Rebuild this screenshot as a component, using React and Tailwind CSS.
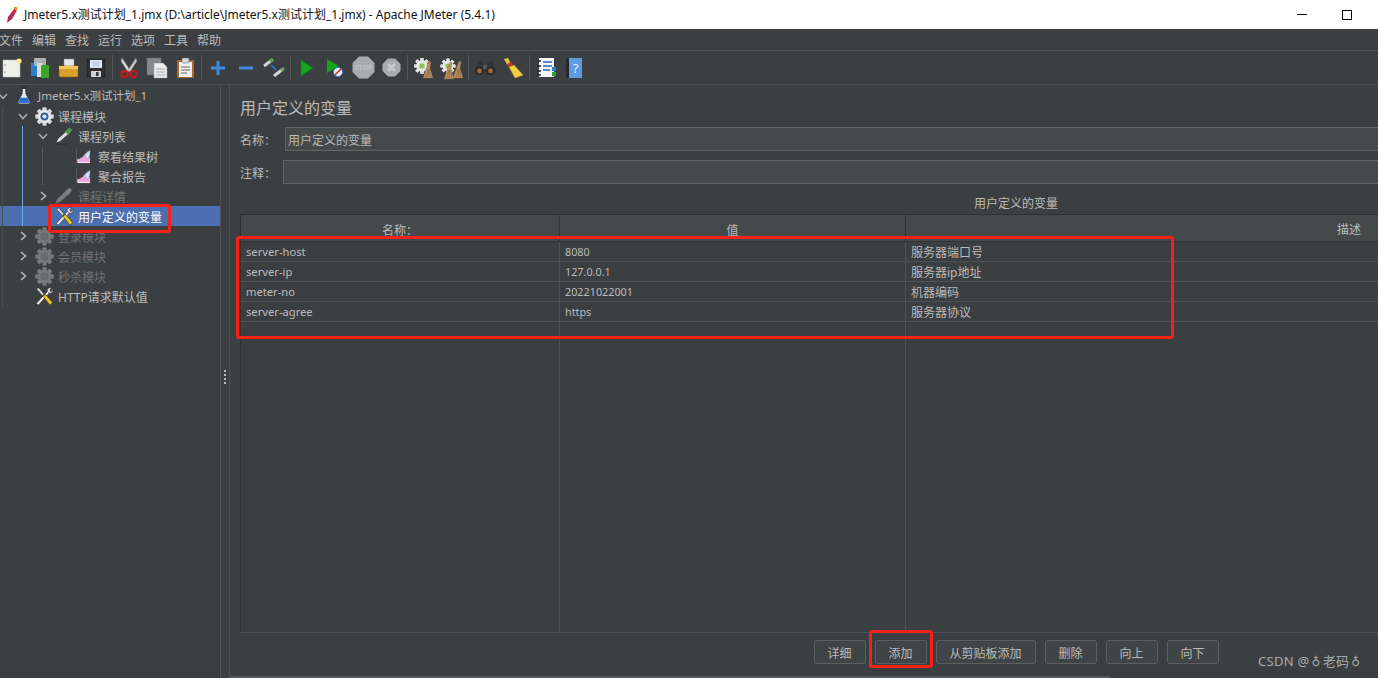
import React from "react";

const FONT = { fontFamily: '"Noto Sans","Noto Sans CJK SC",sans-serif' };

function Cog({ cx, cy, r, hub }) {
  const teeth = [0, 45, 90, 135, 180, 225, 270, 315];
  return (
    <g>
      {teeth.map((a) => (
        <rect key={a} x={cx - r * 0.2} y={cy - r} width={r * 0.4} height={r * 2} rx="0.5" fill="#dcdee0" transform={`rotate(${a} ${cx} ${cy})`} />
      ))}
      <circle cx={cx} cy={cy} r={r * 0.72} fill="#e8e9eb" />
      <circle cx={cx} cy={cy} r={r * 0.34} fill={hub} />
    </g>
  );
}
function Broom({ x, y }) {
  return (
    <g transform={`translate(${x} ${y})`}>
      <path d="M6 0 L8 1 L7 7 L10 17 L0 17 L3 8 Z" fill="#b98d5e" stroke="#7d5f3d" strokeWidth="0.4" />
      <path d="M3 16 L5 8 M5 16 L6 8 M7.5 16 L6.5 8" stroke="#84633f" strokeWidth="0.6" />
    </g>
  );
}
function Gear({ dim }) {
  const teeth = [0, 45, 90, 135, 180, 225, 270, 315];
  return (
    <svg width="19" height="19" viewBox="0 0 20 20" className="shrink-0">
      {teeth.map((a) => (
        <rect key={a} x="8" y="0.5" width="4" height="19" rx="0.8" fill={dim ? "#77797a" : "#d4d6d9"} transform={`rotate(${a} 10 10)`} />
      ))}
      <circle cx="10" cy="10" r="7" fill={dim ? "#77797a" : "#e6e8ea"} />
      <circle cx="10" cy="10" r="4.2" fill={dim ? "#696b6c" : "#2f5f9e"} />
      {!dim && <circle cx="10" cy="10" r="2.2" fill="#dbe7f5" />}
    </svg>
  );
}
function Wrench() {
  return (
    <svg width="20" height="19" viewBox="0 0 22 22" className="shrink-0">
      <path d="M2 19 L4.5 21 L18 6 L16 4 Z" fill="#ececec" stroke="#222" strokeWidth="0.7" />
      <path d="M15 5 C14 2 17 0 20 1 L17.5 3.5 L19 5.5 L21.5 3 C22 6 19 8 17 7 Z" fill="#e6e6e6" stroke="#222" strokeWidth="0.6" />
      <path d="M2 2 L5 1 L11 8 L9 10 Z" fill="#dcdcdc" stroke="#222" strokeWidth="0.7" />
      <path d="M10 11 L12.5 8.5 L21 18 L18 21 Z" fill="#f2c91d" stroke="#2a2a10" strokeWidth="0.7" />
    </svg>
  );
}
function Dropper({ dim }) {
  return (
    <svg width="20" height="20" viewBox="0 0 22 20" className="shrink-0">
      <path d="M2 18 L4 13 L13 5 L16 8 L7 16 Z" fill={dim ? "#7a7a7a" : "#d5d8da"} stroke={dim ? "#707070" : "#222"} strokeWidth="0.8" />
      <path d="M12 5 L17 1 L20 3 L16 9 Z" fill={dim ? "#808080" : "#4d9a4b"} />
      {!dim && <path d="M2 19 H14" stroke="#2b2d2f" strokeWidth="1" />}
    </svg>
  );
}
function Listener() {
  return (
    <svg width="14" height="15" viewBox="0 0 15 15" className="shrink-0">
      <path d="M1 14 L1 11 L6 8 L9 4 L14 9 L14 14 Z" fill="#f3a6dc" />
      <path d="M1 10 V14 H14" stroke="#fff" strokeWidth="1" fill="none" />
      <path d="M9 8 C8 5 11 2 14 1 C14 4 14 9 11 10 C10 10 9 9 9 8 Z" fill="#cfe0f5" stroke="#6e8fc0" strokeWidth="0.5" />
    </svg>
  );
}
function Flask() {
  return (
    <svg width="14" height="20" viewBox="0 0 16 20" className="shrink-0">
      <path d="M6 1 H10 V7 L15 17 Q15 19 13 19 H3 Q1 19 1 17 L6 7 Z" fill="#e6e8ea" stroke="#30343a" strokeWidth="0.8" />
      <path d="M4 12 H12 L14.5 18 H1.5 Z" fill="#2a6fd0" />
      <rect x="5" y="0" width="6" height="2" fill="#2b2d30" />
    </svg>
  );
}
function Chevron({ open }) {
  return (
    <svg width="10" height="10" viewBox="0 0 10 10" className="shrink-0">
      {open ? <path d="M1 3 L5 7.5 L9 3" fill="none" stroke="#a8aaac" strokeWidth="1.6" /> : <path d="M3 1 L7.5 5 L3 9" fill="none" stroke="#b4b6b8" strokeWidth="1.6" />}
    </svg>
  );
}

function Row({ indent, arrow, icon, label, dim, selected, labelClass = "pt-1 text-[12px]" }) {
  return (
    <div className={`h-5 flex items-center shrink-0 ${selected ? "bg-[#4b6eaf]" : ""}`}>
      <div className={`flex items-center ${indent}`}>
        <div className="w-5 flex justify-center">{arrow && <Chevron open={arrow === "open"} />}</div>
        <div className="w-[22px] flex justify-center items-center">{icon}</div>
        <span className={`ml-[3px] whitespace-nowrap ${dim ? "text-[#707274]" : selected ? "text-white" : "text-[#bbbbbb]"} ${labelClass}`}>{label}</span>
      </div>
    </div>
  );
}

const TSep = () => <div className="w-px h-[25px] bg-[#55585a] mx-[2px] shrink-0" />;
const TB = ({ children }) => <div className="w-[28px] h-[26px] flex items-center justify-center shrink-0">{children}</div>;

function Toolbar() {
  return (
    <div className="h-[34px] flex items-center -ml-[2px] border-b border-[#505356] shrink-0">
      <TB><svg width="20" height="20" viewBox="0 0 20 20"><rect x="1" y="2" width="17" height="17" fill="#f0f0ea" stroke="#bbb" strokeWidth="0.5" /><circle cx="17" cy="3" r="2.6" fill="#f8e98a" /><circle cx="3" cy="7" r="0.8" fill="#888" /><circle cx="3" cy="14" r="0.8" fill="#888" /></svg></TB>
      <TB><svg width="20" height="22" viewBox="0 0 20 22"><rect x="1" y="6" width="6" height="13" fill="#2b7fcb" /><rect x="4" y="1" width="12" height="8" rx="1" fill="#a9b2b8" /><rect x="7" y="6" width="5" height="14" fill="#d8dde0" /><rect x="11" y="8" width="8" height="13" rx="1" fill="#3aa824" /></svg></TB>
      <TB><svg width="21" height="20" viewBox="0 0 21 20"><rect x="6" y="1" width="10" height="8" fill="#e8e8e8" stroke="#888" strokeWidth="0.5" /><path d="M1 8 H20 V18 Q20 19 19 19 H2 Q1 19 1 18 Z" fill="#d9a02e" stroke="#8a5d10" strokeWidth="0.6" /><path d="M1 8 H20 V11 H1 Z" fill="#f0c65a" /></svg></TB>
      <TB><svg width="20" height="20" viewBox="0 0 20 20"><path d="M1 1 H19 V19 H1 Z" fill="#2d2f33" stroke="#111" strokeWidth="0.4" /><rect x="4" y="2" width="12" height="8" fill="#dfe7f2" /><path d="M6 4 H14 M6 6 H14 M6 8 H14" stroke="#9db4d0" strokeWidth="0.7" /><rect x="5" y="13" width="10" height="6" fill="#cfd2d4" /><rect x="10" y="14" width="2.5" height="4" fill="#33363a" /></svg></TB>
      <TSep />
      <TB><svg width="18" height="22" viewBox="0 0 18 22"><path d="M2 1 L10 13 L8 15 L1 4 Z" fill="#d8dadc" stroke="#777" strokeWidth="0.5" /><path d="M16 1 L8 13 L10 15 L17 4 Z" fill="#c9cbce" stroke="#777" strokeWidth="0.5" /><circle cx="4.5" cy="17" r="3.2" fill="none" stroke="#c8171e" strokeWidth="2.2" /><circle cx="13.5" cy="17" r="3.2" fill="none" stroke="#c8171e" strokeWidth="2.2" /></svg></TB>
      <TB><svg width="22" height="22" viewBox="0 0 22 22"><rect x="1" y="1" width="14" height="17" fill="#85898c" stroke="#6a6d70" strokeWidth="0.5" /><path d="M8 6 H17 L21 10 V21 H8 Z" fill="#ececec" stroke="#999" strokeWidth="0.5" /><path d="M10 12 H19 M10 15 H19 M10 18 H19" stroke="#9a9a9a" strokeWidth="0.8" /></svg></TB>
      <TB><svg width="19" height="22" viewBox="0 0 19 22"><rect x="1" y="3" width="17" height="18" rx="1" fill="#a86a2a" /><rect x="3" y="5" width="13" height="15" fill="#efefef" /><rect x="6" y="1" width="7" height="5" rx="1" fill="#d4d6d8" stroke="#666" strokeWidth="0.5" /><path d="M5 10 H14 M5 13 H14 M5 16 H11" stroke="#555" strokeWidth="0.9" /></svg></TB>
      <TSep />
      <TB><svg width="16" height="16" viewBox="0 0 16 16"><path d="M8 1 V15 M1 8 H15" stroke="#3f8bdc" strokeWidth="3" /></svg></TB>
      <TB><svg width="16" height="16" viewBox="0 0 16 16"><path d="M1 8 H15" stroke="#3f8bdc" strokeWidth="3" /></svg></TB>
      <TB><svg width="22" height="20" viewBox="0 0 22 20"><path d="M1 8 L9 2" stroke="#d2d5d8" strokeWidth="3" /><path d="M7 3.5 L10 1" stroke="#62a35c" strokeWidth="3" /><path d="M11 18 L20 11" stroke="#d2d5d8" strokeWidth="3" /><path d="M18 12.5 L21 10" stroke="#62a35c" strokeWidth="3" /><path d="M8 7 L13 12" stroke="#2f78d0" strokeWidth="1.6" /></svg></TB>
      <TSep />
      <TB><svg width="14" height="18" viewBox="0 0 14 18"><path d="M1 1 L13 9 L1 17 Z" fill="#13a51b" stroke="#0d7a13" strokeWidth="0.5" /></svg></TB>
      <TB><svg width="18" height="20" viewBox="0 0 18 20"><path d="M1 1 L13 8 L1 15 Z" fill="#13a51b" /><circle cx="12" cy="14" r="4.6" fill="#e8eef8" stroke="#3a6fc0" strokeWidth="1" /><path d="M9 17 L15 11" stroke="#d32323" strokeWidth="1.4" /></svg></TB>
      <TB><svg width="23" height="23" viewBox="0 0 23 23"><path d="M7 0.5 H16 L22.5 7 V16 L16 22.5 H7 L0.5 16 V7 Z" fill="#a9abad" /><text x="11.5" y="14" textAnchor="middle" fontSize="7" fontWeight="700" fill="#c0c2c4" style={FONT}>STOP</text></svg></TB>
      <TB><svg width="19" height="19" viewBox="0 0 19 19"><path d="M6 0.5 H13 L18.5 6 V13 L13 18.5 H6 L0.5 13 V6 Z" fill="#a9abad" /><path d="M6 6 L13 13 M13 6 L6 13" stroke="#c6c8ca" strokeWidth="2.6" /></svg></TB>
      <TSep />
      <TB><svg width="22" height="24" viewBox="0 0 22 24"><Cog cx={9} cy={10} r={8} hub="#8fc24a" /><Broom x={10} y={5} /></svg></TB>
      <TB><svg width="24" height="24" viewBox="0 0 24 24"><Cog cx={8} cy={10} r={7.5} hub="#8fc24a" /><Broom x={4} y={6} /><Broom x={13} y={5} /></svg></TB>
      <TSep />
      <TB><svg width="22" height="16" viewBox="0 0 22 16"><circle cx="5.5" cy="10.5" r="5" fill="#2b2b2b" /><circle cx="16.5" cy="10.5" r="5" fill="#2b2b2b" /><circle cx="5.5" cy="11" r="2.4" fill="#a8683a" /><circle cx="16.5" cy="11" r="2.4" fill="#a8683a" /><rect x="3" y="1" width="6" height="6" fill="#343434" /><rect x="13" y="1" width="6" height="6" fill="#343434" /><rect x="9" y="5" width="4" height="4" fill="#555" /></svg></TB>
      <TB><svg width="22" height="22" viewBox="0 0 22 22"><path d="M2 2 L6 1 L9 7 L6 9 Z" fill="#e8c33a" /><path d="M5 7 L10 5 L11 8 L7 10 Z" fill="#d22c2c" /><path d="M7 10 L12 8 L21 18 L13 21 Z" fill="#f0d23c" stroke="#b39a20" strokeWidth="0.5" /></svg></TB>
      <TSep />
      <TB><svg width="20" height="21" viewBox="0 0 20 21"><rect x="3" y="1" width="15" height="19" fill="#f7f7f7" /><path d="M1 4 H5 M1 9 H5 M1 14 H5 M1 18 H5" stroke="#222" strokeWidth="1.5" /><path d="M7 5 H16 M7 9 H16 M7 13 H14" stroke="#2a66c4" strokeWidth="1.3" /><rect x="16" y="10" width="4" height="4" fill="#2c7fd0" /><rect x="16" y="15" width="4" height="4" fill="#2f9e36" /></svg></TB>
      <TB><svg width="18" height="22" viewBox="0 0 18 22"><rect x="1" y="1" width="16" height="20" rx="1" fill="#25282b" /><rect x="4" y="1" width="13" height="20" fill="#5e9be0" /><text x="10.5" y="16" textAnchor="middle" fontSize="13" fill="#e8f0fb" style={FONT}>?</text></svg></TB>
    </div>
  );
}

const rows = [
  ["server-host", "8080", "服务器端口号"],
  ["server-ip", "127.0.0.1", "服务器ip地址"],
  ["meter-no", "20221022001", "机器编码"],
  ["server-agree", "https", "服务器协议"],
];

const Btn = ({ children, w }) => (
  <div className={`${w} h-6 shrink-0 border border-[#5e6060] rounded-[3px] bg-[#3f4446] text-[12px] text-[#bbbbbb] flex items-center justify-center pt-[3px] pr-px`}>{children}</div>
);

export default function App() {
  return (
    <div className="relative w-[1378px] h-[678px] overflow-hidden bg-[#3c3f41] flex flex-col" style={FONT}>
      {/* Title bar */}
      <div className="h-[29px] bg-white flex items-center shrink-0">
        <svg width="12" height="18" viewBox="0 0 12 18" className="ml-[6px] shrink-0">
          <path d="M1 17 L2 11 L8 3 L11 4 L6 13 Z" fill="#b52a4e" />
          <path d="M8 1 L11 1 L11 4 L8 3 Z" fill="#e58a2d" />
        </svg>
        <span className="ml-[6px] text-[12px] text-[#111] whitespace-nowrap">Jmeter5.x测试计划_1.jmx (D:\article\Jmeter5.x测试计划_1.jmx) - Apache JMeter (5.4.1)</span>
        <div className="ml-auto flex items-center mr-[26px]">
          <div className="w-[10px] h-px bg-black mr-[35px]" />
          <div className="w-[10px] h-[10px] border border-black" />
        </div>
      </div>
      {/* Menu */}
      <div className="h-[22px] flex items-center gap-[10px] pt-[2px] text-[12px] text-[#bbbbbb] border-b border-[#505356] shrink-0 -ml-px">
        {["文件", "编辑", "查找", "运行", "选项", "工具", "帮助"].map((m) => <span key={m} className="w-[23px] whitespace-nowrap">{m}</span>)}
      </div>
      <Toolbar />
      {/* Body */}
      <div className="flex flex-1 min-h-0">
        {/* Tree */}
        <div className="relative w-[221px] shrink-0 border-r border-[#505356] pt-[1px] flex flex-col overflow-hidden">
          <Row indent="-ml-[7px]" arrow="open" icon={<Flask />} label="Jmeter5.x测试计划_1" labelClass="text-[11.5px]" />
          <Row indent="pl-[13px]" arrow="open" icon={<Gear />} label="课程模块" />
          <Row indent="pl-[33px]" arrow="open" icon={<Dropper />} label="课程列表" />
          <Row indent="pl-[53px]" icon={<Listener />} label="察看结果树" />
          <Row indent="pl-[53px]" icon={<Listener />} label="聚合报告" />
          <Row indent="pl-[33px]" arrow="closed" icon={<Dropper dim />} label="课程详情" dim />
          <Row indent="pl-[33px]" icon={<Wrench />} label="用户定义的变量" selected />
          <Row indent="pl-[13px]" arrow="closed" icon={<Gear dim />} label="登录模块" dim />
          <Row indent="pl-[13px]" arrow="closed" icon={<Gear dim />} label="会员模块" dim />
          <Row indent="pl-[13px]" arrow="closed" icon={<Gear dim />} label="秒杀模块" dim />
          <Row indent="pl-[13px]" icon={<Wrench />} label="HTTP请求默认值" />
          <div className="absolute left-[22px] top-[41px] h-[100px] w-px bg-[#6aa9e8]" />
          <div className="absolute left-[42px] top-[62px] h-[38px] w-px bg-[#55585a]" />
          <div className="absolute left-[76px] top-[63px] h-[16px] w-px bg-[#55585a]" />
          <div className="absolute left-[76px] top-[83px] h-[16px] w-px bg-[#55585a]" />
          <div className="absolute left-[2px] top-[22px] h-[200px] w-px bg-[#4a4d4f]" />
        </div>
        {/* Splitter */}
        <div className="w-[9px] shrink-0 flex flex-col items-center justify-center gap-[2px] pb-[10px] pr-px border-r border-[#505356]">
          <div className="w-[2px] h-[2px] bg-[#bbbbbb]" />
          <div className="w-[2px] h-[2px] bg-[#bbbbbb]" />
          <div className="w-[2px] h-[2px] bg-[#bbbbbb]" />
          <div className="w-[2px] h-[2px] bg-[#bbbbbb]" />
        </div>
        {/* Right */}
        <div className="flex-1 min-w-0 pl-[10px] flex flex-col">
          <div className="h-[21px] mt-[13px] text-[16px] leading-[21px] text-[#bbbbbb]">用户定义的变量</div>
          <div className="flex items-center h-6 mt-[8px]">
            <span className="w-[45px] text-[12px] text-[#bbbbbb] pt-1">名称：</span>
            <div className="flex-1 h-6 border border-[#646464] bg-[#45494a] text-[12px] text-[#bbbbbb] flex items-center pl-[2px] pt-1 -mr-2">用户定义的变量</div>
          </div>
          <div className="flex items-center h-6 mt-[9px]">
            <span className="w-[43px] text-[12px] text-[#bbbbbb] pt-1">注释：</span>
            <div className="flex-1 h-6 border border-[#646464] bg-[#45494a] -mr-2" />
          </div>
          <div className="h-[21px] mt-[9px] text-center text-[12px] leading-[21px] text-[#bbbbbb] pl-[414px]">用户定义的变量</div>
          <div className="border-t border-l border-b border-[#2f3133] border-b-[#505356] h-[419px] -mr-2 flex flex-col">
            <div className="flex h-[27px] bg-[#45494a] border-b border-[#323436] shrink-0 text-[12px] text-[#bbbbbb]">
              <div className="w-[319px] border-r border-[#323436] flex items-end justify-center leading-[20px]">名称：</div>
              <div className="w-[346px] border-r border-[#323436] flex items-end justify-center leading-[20px]">值</div>
              <div className="flex-1 flex items-end justify-end pr-[25px] leading-[22px]">描述</div>
            </div>
            {rows.map((r, i) => (
              <div key={i} className="flex h-5 border-b border-[#4f5254] shrink-0 text-[#bbbbbb]">
                <div className="w-[319px] border-r border-[#4f5254] pl-[5px] pt-[2px] flex items-center text-[11.2px]">{r[0]}</div>
                <div className="w-[346px] border-r border-[#4f5254] pl-[5px] pt-[2px] flex items-center text-[10.8px]">{r[1]}</div>
                <div className="flex-1 pl-[5px] flex items-center text-[12px] pt-[2px]">{r[2]}</div>
              </div>
            ))}
            <div className="flex flex-1">
              <div className="w-[319px] border-r border-[#4f5254]" />
              <div className="w-[346px] border-r border-[#4f5254]" />
            </div>
          </div>
          <div className="flex items-start gap-[9px] pt-[7px] pl-[574px] -mr-2">
            <Btn w="w-[52px]">详细</Btn>
            <Btn w="w-[52px]">添加</Btn>
            <Btn w="w-[100px]">从剪贴板添加</Btn>
            <Btn w="w-[52px]">删除</Btn>
            <Btn w="w-[52px]">向上</Btn>
            <Btn w="w-[52px]">向下</Btn>
          </div>
        </div>
      </div>
      {/* Bottom scrollbar hint */}
      <div className="absolute left-[230px] bottom-0 w-[880px] h-[2px] bg-[#55585a]" />
      {/* Red annotations */}
      <div className="absolute left-[48px] top-[204px] w-[123px] h-[29px] border-[3px] border-[#f5221b] rounded-[3px]" />
      <div className="absolute left-[236px] top-[236px] w-[938px] h-[103px] border-[3px] border-[#f5221b] rounded-[3px]" />
      <div className="absolute left-[869px] top-[630px] w-[64px] h-[38px] border-[3px] border-[#f5221b] rounded-[3px]" />
      {/* Watermark */}
      <div className="absolute left-[1258px] top-[652px] text-[13px] leading-[18px] text-[#a9abac] tracking-[0.3px] whitespace-nowrap">CSDN @<span className="font-['DejaVu_Sans'] text-[12px] mx-[2px]">♁</span>老码<span className="font-['DejaVu_Sans'] text-[12px] ml-[2px]">♁</span></div>
    </div>
  );
}
